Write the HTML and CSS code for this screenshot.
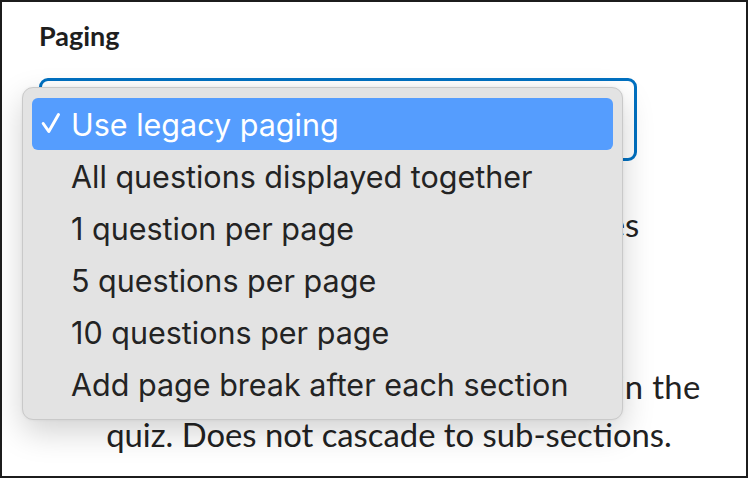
FILE: index.html
```html
<!DOCTYPE html>
<html>
<head>
<meta charset="utf-8">
<link rel="stylesheet" href="styles.css">
</head>
<body>
<div class="frame">
  <div class="field">
    <div class="label">Paging</div>
    <div class="select"></div>
    <div class="desc">
      <p class="para">How questions are split over pages<br>when a student takes the quiz.</p>
      <p class="para"><span class="wide">Applies to questions at the top level in the</span><br>quiz. Does not cascade to sub-sections.</p>
    </div>
  </div>
  <div class="menu">
    <div class="item selected">
      <svg class="check" width="20" height="22" viewBox="0 0 20 22"><path d="M2.2 11.5 L7.8 19.5 L17.5 2.5" fill="none" stroke="#fff" stroke-width="3" stroke-linecap="round" stroke-linejoin="round"/></svg>
      <span>Use legacy paging</span>
    </div>
    <div class="item"><span>All questions displayed together</span></div>
    <div class="item"><span>1 question per page</span></div>
    <div class="item"><span>5 questions per page</span></div>
    <div class="item"><span>10 questions per page</span></div>
    <div class="item"><span>Add page break after each section</span></div>
  </div>
</div>
</body>
</html>
```
FILE: styles.css
```css
html, body {
  margin: 0;
  padding: 0;
  background: #ffffff;
}
.frame {
  position: relative;
  box-sizing: border-box;
  width: 748px;
  height: 478px;
  border: 2px solid #1c1c1c;
  overflow: hidden;
  background: #ffffff;
}
.field {
  padding: 18px 0 0 37px;
  width: 700px;
}
.label {
  font-family: Lato, "Liberation Sans", sans-serif;
  font-weight: 700;
  font-size: 27px;
  line-height: 31px;
  color: #1e1e1e;
}
.select {
  margin-top: 27px;
  width: 598px;
  height: 83px;
  box-sizing: border-box;
  border: 3px solid #0070c0;
  border-radius: 9px;
  background: #ffffff;
}
.desc {
  font-family: Lato, "Liberation Sans", sans-serif;
  font-size: 32.8px;
  line-height: 48px;
  color: #222222;
  text-align: center;
  margin-top: 40px;
}
.para {
  margin: 0 0 66px 0;
  white-space: nowrap;
}
.wide {
  letter-spacing: 0.4px;
}
.menu {
  position: absolute;
  left: 20px;
  top: 85px;
  width: 601px;
  box-sizing: border-box;
  padding: 10px 9px 9px 9px;
  background: #e3e3e3;
  border: 1px solid #c9c9c9;
  border-radius: 11px;
  box-shadow: 0 12px 32px rgba(0, 0, 0, 0.18), 0 0 3px rgba(0, 0, 0, 0.06);
  font-family: Inter, "Noto Sans", sans-serif;
  font-size: 30.5px;
  color: #232323;
}
.item {
  display: flex;
  align-items: center;
  height: 52px;
  padding-left: 39px;
  position: relative;
  border-radius: 6px;
  white-space: nowrap;
}
.item.selected {
  background: #559dfe;
  color: #ffffff;
}
.check {
  position: absolute;
  left: 9px;
  top: 14px;
}
```
